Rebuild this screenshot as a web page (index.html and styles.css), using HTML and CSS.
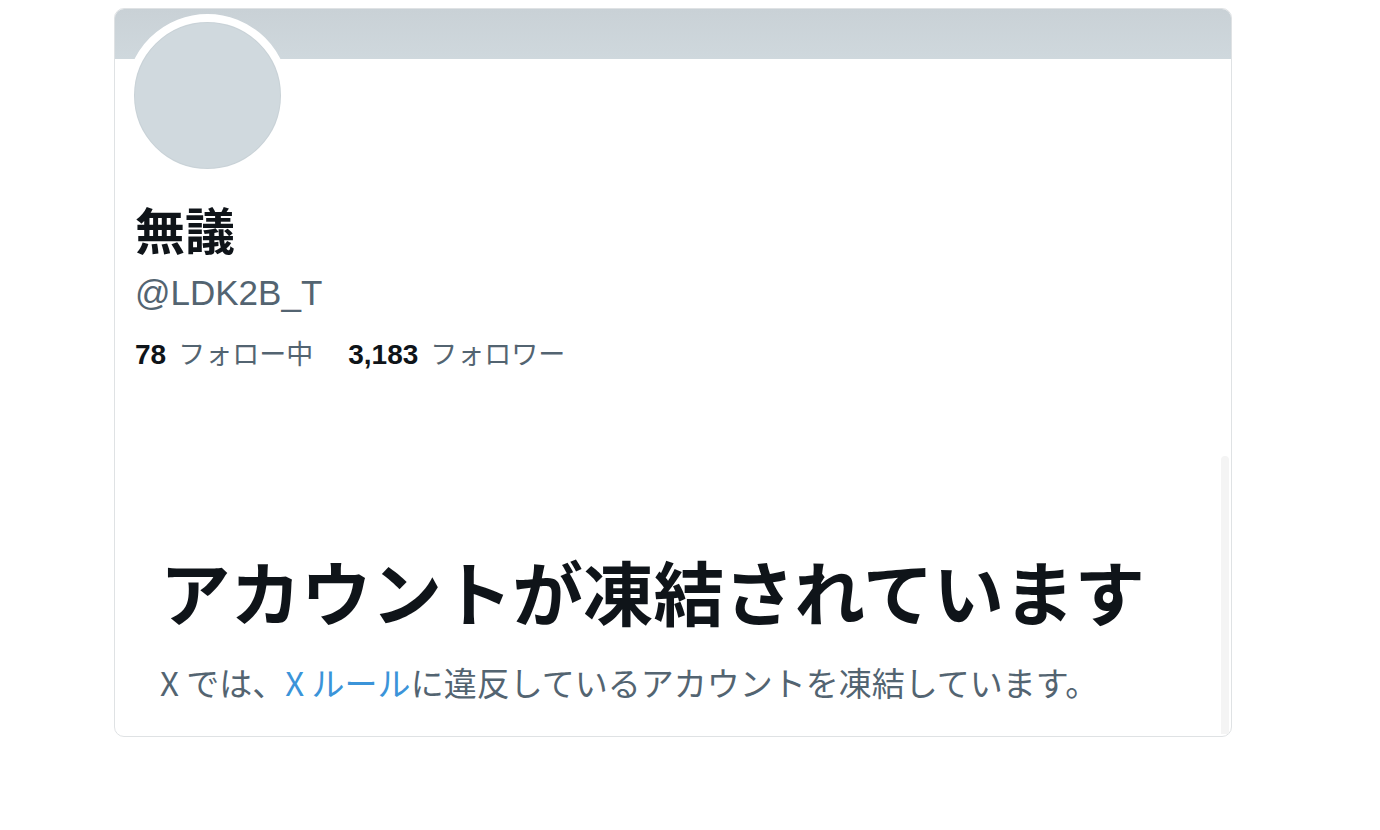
FILE: index.html
```html
<!DOCTYPE html>
<html lang="ja">
    <head>
        <meta charset="UTF-8">
        <meta name="viewport" content="width=device-width, initial-scale=1.0">
        <title>アカウントが凍結されています</title>
        <link rel="stylesheet" href="styles.css">
    </head>
    <body>
        <div class="card">
            <div class="banner"></div>
            <div class="avatar"></div>
            <div class="profile">
                <h1 class="name">無議</h1>
                <div class="handle">@LDK2B_T</div>
                <div class="stats">
                    <span><b>78</b> フォロー中</span>
                    <span><b>3,183</b> フォロワー</span>
                </div>
            </div>
            <div class="notice">
                <div class="track"></div>
                <h2 class="title">アカウントが凍結されています</h2>
                <p class="desc">X では、<a href="#">X ルール</a>に違反しているアカウントを凍結しています。</p>
            </div>
        </div>
    </body>
</html>
```

FILE: styles.css
```css
body{
    margin: 0;
    background: #fff;
    font-family: "Noto Sans CJK JP", "Noto Sans", sans-serif;
    color: #0f1419;
}
.card{
    margin: 8px 0 0 114px;
    width: 1116px;
    height: 727px;
    border: 1px solid #dfe2e4;
    border-radius: 10px;
    overflow: hidden;
    position: relative;
}
.banner{
    height: 50px;
    background: linear-gradient(#c9d1d6, #cfd8dd);
}
.avatar{
    width: 147px;
    height: 147px;
    margin: -45px 0 0 11px;
    border: 8px solid #fff;
    border-radius: 50%;
    background: #d0d9de;
    box-shadow: inset 0 0 0 1px #c9d2d7;
}
.profile{
    padding: 0 20px;
}
.name{
    margin: 18px 0 0;
    font-size: 50px;
    line-height: 66px;
    font-weight: 700;
}
.handle{
    margin-top: 12px;
    font-family: "Liberation Sans", "Noto Sans CJK JP", sans-serif;
    font-size: 35px;
    line-height: 40px;
    color: #536471;
}
.stats{
    display: flex;
    gap: 35px;
    margin-top: 22px;
    font-size: 27px;
    line-height: 36px;
    color: #536471;
}
.stats b{
    font-family: "Liberation Sans", sans-serif;
    font-size: 28px;
    color: #0f1419;
    margin-right: 6px;
}
.notice{
    padding: 0 40px 0 45px;
    margin-top: 172px;
}
.track{
    position: absolute;
    right: 2px;
    top: 447px;
    bottom: 2px;
    width: 8px;
    border-radius: 6px 6px 0 0;
    background: #f4f4f4;
}
.title{
    margin: 0;
    font-size: 70.5px;
    line-height: 90px;
    font-weight: 700;
}
.desc{
    margin: 25px 0 0;
    font-size: 33px;
    line-height: 44px;
    color: #536471;
}
.desc a{
    color: #3b94d9;
    text-decoration: none;
}
```
